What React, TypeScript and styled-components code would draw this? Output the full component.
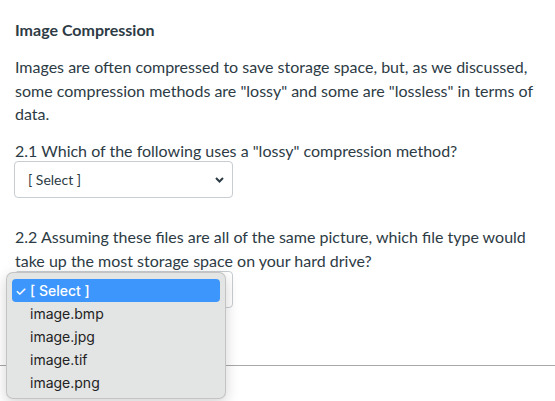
import React from 'react';
import styled, { createGlobalStyle } from 'styled-components';

const GlobalStyle = createGlobalStyle`
  html, body {
    margin: 0;
    padding: 0;
    background: #fff;
  }
  body {
    font-family: Lato, "Noto Sans", sans-serif;
    color: #2d3b45;
  }
`;

const Page = styled.div`
  width: 555px;
  height: 401px;
  overflow: hidden;
`;

const Content = styled.div`
  padding: 20px 12px 0 15px;
`;

const Heading = styled.h3`
  margin: 0;
  font-size: 16px;
  line-height: 20px;
  font-weight: 700;
`;

const Paragraph = styled.p`
  margin: 15px 0 13px;
  font-size: 16px;
  line-height: 23.5px;
`;

const Question = styled.div`
  font-size: 16px;
  line-height: 23.5px;
  margin-bottom: -1px;
`;

const SelectWrap = styled.div`
  position: relative;
  width: 219px;
  margin-left: -1px;
`;

const SelectBox = styled.div`
  box-sizing: border-box;
  height: 37px;
  border: 1px solid #c7cdd1;
  border-radius: 4px;
  background: #fff;
  display: flex;
  align-items: center;
  justify-content: space-between;
  padding: 0 8px 0 13px;
  font-size: 14px;
  color: #2d3b45;
`;

const Block = styled.div<{ gap: number }>`
  margin-bottom: ${({ gap }) => gap}px;
`;

const Rule = styled.hr`
  margin: 0;
  border: 0;
  border-top: 1px solid #a8a8a8;
`;

const Menu = styled.div`
  position: absolute;
  left: -8px;
  top: 1px;
  width: 220px;
  box-sizing: border-box;
  padding: 6px 5px 4px;
  background: #e3e5e4;
  border: 1px solid rgba(0, 0, 0, 0.14);
  border-radius: 7px;
  box-shadow: 0 4px 14px rgba(0, 0, 0, 0.18);
  font-family: Inter, "Noto Sans", sans-serif;
  font-size: 14px;
  z-index: 2;
`;

const Option = styled.div<{ active?: boolean }>`
  display: flex;
  align-items: center;
  height: 23px;
  padding-left: ${({ active }) => (active ? 3 : 18)}px;
  border-radius: 4px;
  color: ${({ active }) => (active ? '#fff' : '#222')};
  background: ${({ active }) => (active ? '#3d96fc' : 'transparent')};
  font-weight: ${({ active }) => (active ? 500 : 400)};
`;

const Check = styled.span`
  width: 15px;
  font-size: 13px;
`;

const Chevron = () => (
  <svg width="9" height="6" viewBox="0 0 9 6">
    <polyline points="1,1 4.5,4.5 8,1" fill="none" stroke="#2d3b45" strokeWidth="2" />
  </svg>
);

const options = ['image.bmp', 'image.jpg', 'image.tif', 'image.png'];

export default function App() {
  return (
    <Page>
      <GlobalStyle />
      <Content>
        <Heading>Image Compression</Heading>
        <Paragraph>
          Images are often compressed to save storage space, but, as we discussed, some compression
          methods are "lossy" and some are "lossless" in terms of data.
        </Paragraph>
        <Block gap={27}>
          <Question>2.1 Which of the following uses a "lossy" compression method?</Question>
          <SelectWrap>
            <SelectBox>
              <span>[ Select ]</span>
              <Chevron />
            </SelectBox>
          </SelectWrap>
        </Block>
        <Block gap={57}>
          <Question>
            2.2 Assuming these files are all of the same picture, which file type would take up the
            most storage space on your hard drive?
          </Question>
          <SelectWrap>
            <SelectBox>
              <span>[ Select ]</span>
              <Chevron />
            </SelectBox>
            <Menu>
              <Option active>
                <Check>✓</Check>
                <span>[ Select ]</span>
              </Option>
              {options.map((o) => (
                <Option key={o}>{o}</Option>
              ))}
            </Menu>
          </SelectWrap>
        </Block>
      </Content>
      <Rule />
    </Page>
  );
}
